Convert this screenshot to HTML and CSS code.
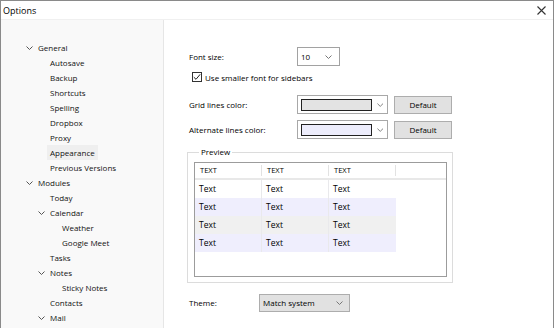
FILE: index.html
```html
<!DOCTYPE html>
<html>
<head lang="en">
    <meta charset="UTF-8">
    <title>Options</title>
    <link rel="stylesheet" href="styles.css">
</head>
<body>
<div class="win">
    <div class="titlebar">
        <span class="title">Options</span>
        <svg class="close" width="9" height="9" viewBox="0 0 9 9"><path d="M0.5 0.5L8.5 8.5M8.5 0.5L0.5 8.5" stroke="#333" stroke-width="1.1" fill="none"/></svg>
    </div>
    <div class="main">
        <div class="tree">
            <div class="item"><span class="chev"><svg width="7" height="4" viewBox="0 0 7 4"><path d="M0.5 0.5L3.5 3.5L6.5 0.5" stroke="#555" fill="none"/></svg></span>General</div>
            <div class="item l1"><span class="chev"></span>Autosave</div>
            <div class="item l1"><span class="chev"></span>Backup</div>
            <div class="item l1"><span class="chev"></span>Shortcuts</div>
            <div class="item l1"><span class="chev"></span>Spelling</div>
            <div class="item l1"><span class="chev"></span>Dropbox</div>
            <div class="item l1"><span class="chev"></span>Proxy</div>
            <div class="item l1"><span class="chev"></span><span class="sel">Appearance</span></div>
            <div class="item l1"><span class="chev"></span>Previous Versions</div>
            <div class="item"><span class="chev"><svg width="7" height="4" viewBox="0 0 7 4"><path d="M0.5 0.5L3.5 3.5L6.5 0.5" stroke="#555" fill="none"/></svg></span>Modules</div>
            <div class="item l1"><span class="chev"></span>Today</div>
            <div class="item l1"><span class="chev"><svg width="7" height="4" viewBox="0 0 7 4"><path d="M0.5 0.5L3.5 3.5L6.5 0.5" stroke="#555" fill="none"/></svg></span>Calendar</div>
            <div class="item l2"><span class="chev"></span>Weather</div>
            <div class="item l2"><span class="chev"></span>Google Meet</div>
            <div class="item l1"><span class="chev"></span>Tasks</div>
            <div class="item l1"><span class="chev"><svg width="7" height="4" viewBox="0 0 7 4"><path d="M0.5 0.5L3.5 3.5L6.5 0.5" stroke="#555" fill="none"/></svg></span>Notes</div>
            <div class="item l2"><span class="chev"></span>Sticky Notes</div>
            <div class="item l1"><span class="chev"></span>Contacts</div>
            <div class="item l1"><span class="chev"><svg width="7" height="4" viewBox="0 0 7 4"><path d="M0.5 0.5L3.5 3.5L6.5 0.5" stroke="#555" fill="none"/></svg></span>Mail</div>
        </div>
        <div class="pane">
            <div class="row">
                <span class="lbl">Font size:</span>
                <div class="numsel">
                    <span>10</span>
                    <svg width="7" height="4" viewBox="0 0 7 4"><path d="M0.5 0.5L3.5 3.5L6.5 0.5" stroke="#777" fill="none"/></svg>
                </div>
            </div>
            <div class="checkrow">
                <span class="cbox"><svg width="8" height="8" viewBox="0 0 8 8"><path d="M0.8 4.2L3 6.3L7.2 1.3" stroke="#222" stroke-width="1" fill="none"/></svg></span>
                <span>Use smaller font for sidebars</span>
            </div>
            <div class="row grid-row">
                <span class="lbl">Grid lines color:</span>
                <div class="colsel">
                    <span class="swatch sw-grid"></span>
                    <svg width="7" height="4" viewBox="0 0 7 4"><path d="M0.5 0.5L3.5 3.5L6.5 0.5" stroke="#777" fill="none"/></svg>
                </div>
                <button class="btn">Default</button>
            </div>
            <div class="row alt-row">
                <span class="lbl">Alternate lines color:</span>
                <div class="colsel">
                    <span class="swatch sw-alt"></span>
                    <svg width="7" height="4" viewBox="0 0 7 4"><path d="M0.5 0.5L3.5 3.5L6.5 0.5" stroke="#777" fill="none"/></svg>
                </div>
                <button class="btn">Default</button>
            </div>
            <fieldset class="group">
                <legend>Preview</legend>
                <div class="list">
                    <div class="lhead">
                        <span class="hcell">TEXT</span>
                        <span class="hcell">TEXT</span>
                        <span class="hcell">TEXT</span>
                    </div>
                    <div class="lrow">
                        <span class="cell">Text</span><span class="cell">Text</span><span class="cell">Text</span>
                    </div>
                    <div class="lrow lav">
                        <span class="cell">Text</span><span class="cell">Text</span><span class="cell">Text</span>
                    </div>
                    <div class="lrow grey">
                        <span class="cell">Text</span><span class="cell">Text</span><span class="cell">Text</span>
                    </div>
                    <div class="lrow lav">
                        <span class="cell">Text</span><span class="cell">Text</span><span class="cell">Text</span>
                    </div>
                </div>
            </fieldset>
            <div class="row theme-row">
                <span class="lbl lbl-theme">Theme:</span>
                <div class="themesel">
                    <span>Match system</span>
                    <svg width="7" height="4" viewBox="0 0 7 4"><path d="M0.5 0.5L3.5 3.5L6.5 0.5" stroke="#777" fill="none"/></svg>
                </div>
            </div>
        </div>
    </div>
</div>
</body>
</html>
```

FILE: styles.css
```css
*{margin:0;padding:0;box-sizing:border-box;}
body{font-family:"Open Sans","Noto Sans",sans-serif;font-size:8px;color:#000;background:#fff;}
.win{width:554px;height:328px;border:1px solid #8a8a8a;border-bottom:0;display:flex;flex-direction:column;overflow:hidden;}
.titlebar{height:19px;display:flex;align-items:center;justify-content:space-between;padding:0 7px 0 2px;border-bottom:1px solid #f0f0f0;flex:none;}
.title{font-size:9px;}
.main{flex:1;display:flex;}

/* left tree */
.tree{width:163px;flex:none;background:#f9f9f9;border-right:1px solid #e6e6e6;padding:20px 0 0 25px;color:#111;}
.item{height:15px;display:flex;align-items:center;white-space:nowrap;}
.l1{padding-left:12px;}
.l2{padding-left:24px;}
.chev{width:12px;height:15px;display:flex;align-items:center;flex:none;}
.sel{background:#efefef;padding:0 3px;margin-left:-3px;line-height:15px;}

/* right pane */
.pane{flex:1;padding:27px 0 0 25px;display:flex;flex-direction:column;align-items:flex-start;}
.row{display:flex;align-items:center;height:19px;}
.lbl{width:108px;}
.numsel{width:43px;height:19px;border:1px solid #a2a2a2;display:flex;align-items:center;justify-content:space-between;padding:0 7px 0 3px;}
.checkrow{display:flex;align-items:center;height:14px;margin-top:4px;padding-left:3px;}
.cbox{width:10px;height:10px;border:1px solid #333;display:flex;align-items:center;justify-content:center;margin-right:3px;}
.grid-row{margin-top:11px;}
.alt-row{margin-top:6px;}
.colsel{width:91px;height:19px;border:1px solid #a8a8a8;display:flex;align-items:center;padding:0 4px 0 3px;gap:5px;}
.swatch{width:76px;height:12px;border:1px solid #222;}
.sw-grid{background:#e3e3e3;}
.sw-alt{background:#ededfc;}
.btn{margin-left:6px;width:58px;height:18px;background:#e1e1e1;border:1px solid #adadad;font-family:inherit;font-size:8px;color:#000;}

.group{margin:7px 0 0 -2px;width:266px;border:1px solid #dcdcdc;padding:0 5px 5px 6px;}
.group legend{margin-left:5px;padding:0 2px;line-height:12px;}
.list{margin-top:4px;width:253px;height:115px;border:1px solid #9c9c9c;}
.lhead{height:17px;display:flex;align-items:center;border-bottom:2px solid #e8e8e8;font-size:7.5px;}
.hcell{width:67px;height:11px;line-height:11px;padding-left:5px;border-right:1px solid #e2e2e2;}
.lrow{width:201px;height:18px;display:flex;font-size:8.5px;}
.cell{width:67px;line-height:18px;padding-left:4px;border-right:1px solid #e9e9ec;}
.cell:last-child{border-right:0;}
.lav{background:#efeefd;}
.grey{background:#f0f0f0;}

.theme-row{margin-top:10px;}
.lbl-theme{width:70px;}
.themesel{width:91px;height:18px;background:#e1e1e1;border:1px solid #adadad;display:flex;align-items:center;justify-content:space-between;padding:0 6px 0 3px;}
```
